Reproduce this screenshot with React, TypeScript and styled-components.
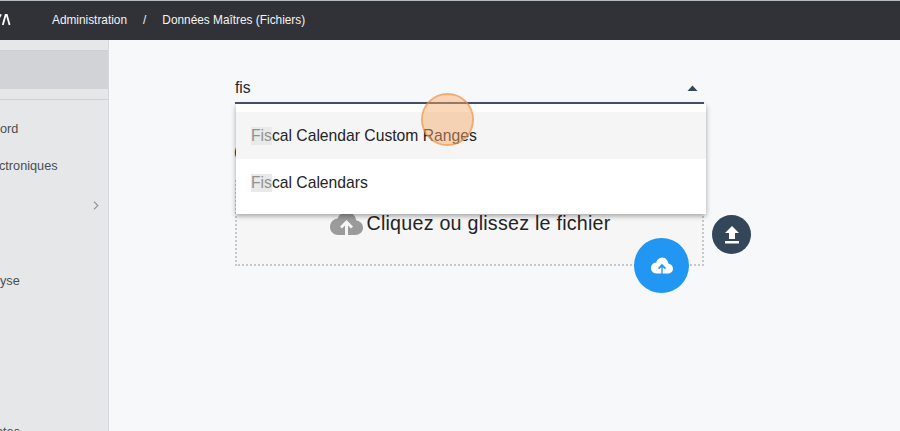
import React from 'react';
import styled, { createGlobalStyle } from 'styled-components';

const Global = createGlobalStyle`
  * { box-sizing: border-box; }
  body { margin: 0; font-family: "Liberation Sans", Arial, sans-serif; background: #f7f8fa; overflow: hidden; }
`;

const Page = styled.div`
  height: 431px;
  display: grid;
  grid-template: 40px 391px / 109px 1fr;
  overflow: hidden;
`;

const Header = styled.header`
  grid-column: 1 / -1;
  display: flex;
  align-items: center;
  padding-bottom: 2px;
  background: #313237;
  border-top: 1px solid #b5bcbf;
  color: #f4f4f5;
  font-size: 11.85px;
`;

const Logo = styled.svg`
  width: 12px;
  height: 12px;
  margin-right: 40px;
`;

const Crumb = styled.span`
  white-space: nowrap;
`;

const Slash = styled.span`
  margin: 0 16px;
`;

const Sidebar = styled.aside`
  background: #e5e7e9;
  border-right: 1px solid #d5d7da;
  padding-top: 10px;
  overflow: hidden;
`;

const Selected = styled.div`
  height: 39px;
  background: #d1d3d7;
  border-top: 1px solid #cccfd3;
`;

const Divider = styled.div`
  height: 1px;
  margin: 10px 0;
  background: #cfd1d4;
`;

const NavItem = styled.div<{ $height: number; $shift?: number; $lift?: number }>`
  display: flex;
  align-items: center;
  justify-content: space-between;
  height: ${p => p.$height}px;
  padding-right: 9px;
  padding-bottom: ${p => p.$lift ?? 0}px;
  margin-left: ${p => p.$shift ?? 0}px;
  color: #4b4d50;
  font-size: 12.7px;
  white-space: nowrap;
`;

const Chevron = styled.svg`
  width: 6px;
  height: 9px;
  margin-left: auto;
`;

const Main = styled.main`
  padding: 32px 0 0 126px;
`;

const Uploader = styled.section`
  position: relative;
  width: 469px;
`;

const Field = styled.div`
  display: flex;
  align-items: center;
  justify-content: space-between;
  height: 32px;
  padding: 1px 6px 0 0;
  border-bottom: 2px solid #46566a;
  color: #25282b;
  font-size: 15.7px;
`;

const Caret = styled.svg`
  width: 11px;
  height: 6px;
`;

const FileLabel = styled.div`
  height: 76px;
  padding-top: 39px;
  margin-left: -1px;
  color: #25282b;
  font-size: 15.7px;
`;

const Dropzone = styled.div`
  display: flex;
  justify-content: center;
  height: 86px;
  padding: 25px 0 0 2px;
  background: #f6f6f6;
  border: 2px dotted #c6c8cb;
  color: #242424;
  font-size: 19.7px;
  letter-spacing: 0.23px;
  line-height: 32px;
  white-space: nowrap;
`;

const DropIcon = styled.svg`
  width: 33px;
  height: 24px;
  margin: 4px 3px 0 0;
  fill: #9b9b9b;
`;

const Menu = styled.ul`
  position: absolute;
  top: 32px;
  left: 1px;
  width: 470px;
  height: 110px;
  margin: 0;
  padding: 8px 0;
  list-style: none;
  background: #fff;
  box-shadow: 0 2px 5px rgba(0, 0, 0, 0.35);
`;

const Option = styled.li<{ $active?: boolean }>`
  display: flex;
  align-items: center;
  height: 47px;
  padding-left: 15px;
  background: ${p => (p.$active ? '#f5f5f5' : '#fff')};
  color: #242424;
  font-size: 15.7px;
`;

const Match = styled.mark`
  padding: 0;
  background: #e9e9e9;
  color: #929292;
`;

const RoundButton = styled.button<{ $size: number; $color: string; $x: number; $y: number }>`
  position: absolute;
  left: ${p => p.$x}px;
  top: ${p => p.$y}px;
  display: grid;
  place-items: center;
  width: ${p => p.$size}px;
  height: ${p => p.$size}px;
  padding: 0;
  border: 0;
  border-radius: 50%;
  background: ${p => p.$color};
`;

const Glyph = styled.svg<{ $w: number; $h: number }>`
  width: ${p => p.$w}px;
  height: ${p => p.$h}px;
  fill: #fff;
`;

const ClickMarker = styled.div`
  position: absolute;
  left: 186px;
  top: 21px;
  width: 53px;
  height: 53px;
  border: 2px solid rgba(240, 145, 70, 0.75);
  border-radius: 50%;
  background: rgba(249, 168, 104, 0.45);
  background-clip: padding-box;
`;

export default function App() {
  return (
    <Page>
      <Global />
      <Header>
        <Logo viewBox="0 0 12 12" fill="none" stroke="#fff" strokeWidth="1.8">
          <path d="M-1 4L1 .4M2.8 11L5.6 1H6.8L9.6 11" />
        </Logo>
        <Crumb>Administration</Crumb>
        <Slash>/</Slash>
        <Crumb>Données Maîtres (Fichiers)</Crumb>
      </Header>
      <Sidebar>
        <Selected />
        <Divider />
        <NavItem $height={38}>ord</NavItem>
        <NavItem $height={38} $shift={-1} $lift={2}>ctroniques</NavItem>
        <NavItem $height={38}>
          <Chevron viewBox="0 0 6 9" fill="none" stroke="#929497" strokeWidth="1.2">
            <path d="M1 .7L4.8 4.5L1 8.3" />
          </Chevron>
        </NavItem>
        <NavItem $height={38} />
        <NavItem $height={38}>yse</NavItem>
        <NavItem $height={113} />
        <NavItem $height={38} $shift={-4}>otes</NavItem>
      </Sidebar>
      <Main>
        <Uploader>
          <Field>
            <span>fis</span>
            <Caret viewBox="0 0 11 6"><path d="M0.5 6L5.5 .5L10.5 6Z" fill="#34465a" /></Caret>
          </Field>
          <FileLabel>(</FileLabel>
          <Dropzone>
            <DropIcon viewBox="0 0 33 24">
              <path d="M15 24V14.5L12 17.5L10 15.5L16.5 9L23 15.5L21 17.5L18 14.5V24H25C29.5 24 33 21 33 16.8C33 12.8 30 10 26.3 9.5C25.5 4.5 21.8 1 16.8 1C12.4 1 9 3.5 7.7 7.5C3.5 8 0 11.2 0 15.8C0 20.5 3.4 24 8 24Z" />
            </DropIcon>
            Cliquez ou glissez le fichier
          </Dropzone>
          <Menu>
            <Option $active><Match>Fis</Match>cal Calendar Custom Ranges</Option>
            <Option><Match>Fis</Match>cal Calendars</Option>
          </Menu>
          <RoundButton $size={55} $color="#2196f3" $x={399} $y={166} aria-label="Importer">
            <Glyph $w={22} $h={17} viewBox="0 0 33 24">
              <path d="M15.5 24V14.5L12 17.5L10.5 15.8L16.5 9.5L22.5 15.8L21 17.5L17.5 14.5V24H25C29.5 24 33 21 33 16.8C33 12.8 30 10 26.3 9.5C25.5 4.5 21.8 0 16.8 0C12.4 0 9 3.5 7.7 7.5C3.5 8 0 11.2 0 15.8C0 20.5 3.4 24 8 24Z" />
            </Glyph>
          </RoundButton>
          <RoundButton $size={39} $color="#34465a" $x={477} $y={143} aria-label="Envoyer">
            <Glyph $w={14} $h={18} viewBox="0 0 14 18">
              <path d="M4 13V7H0L7 0L14 7H10V13ZM0 15H14V17.5H0Z" />
            </Glyph>
          </RoundButton>
          <ClickMarker />
        </Uploader>
      </Main>
    </Page>
  );
}
